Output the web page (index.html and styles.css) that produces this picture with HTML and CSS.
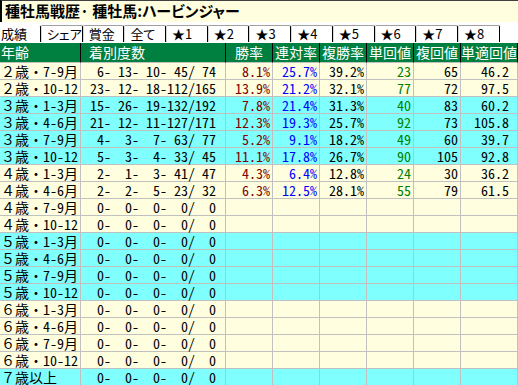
FILE: index.html
```html
<!DOCTYPE html>
<html lang="ja">
<head>
<meta charset="utf-8">
<title>種牡馬戦歴</title>
<link rel="stylesheet" href="styles.css">
</head>
<body>
<div class="title">種牡馬戦歴· 種牡馬:ハービンジャー</div>
<div class="tabs">
  <span class="tab active">成績</span>
  <span class="tab">シェア</span>
  <span class="tab">賞金</span>
  <span class="tab">全て</span>
  <span class="tab">★1</span>
  <span class="tab">★2</span>
  <span class="tab">★3</span>
  <span class="tab">★4</span>
  <span class="tab">★5</span>
  <span class="tab">★6</span>
  <span class="tab">★7</span>
  <span class="tab">★8</span>
</div>
<table class="grid">
  <colgroup>
    <col class="w-age"><col class="w-rec"><col class="w-n"><col class="w-n"><col class="w-n"><col class="w-n"><col class="w-n"><col class="w-last">
  </colgroup>
  <thead>
    <tr><th class="h-age">年齢</th><th class="h-rec">着別度数</th><th>勝率</th><th>連対率</th><th>複勝率</th><th>単回値</th><th>複回値</th><th>単適回値</th></tr>
  </thead>
  <tbody>
    <tr class="cream"><td class="age">２歳・<span class="hw">7-9</span>月</td><td class="rec"> 6- 13- 10- 45/ 74</td><td class="win">8.1%</td><td class="ren">25.7%</td><td>39.2%</td><td class="tan">23</td><td>65</td><td class="last">46.2</td></tr>
    <tr class="cream"><td class="age">２歳・<span class="hw">10-12</span></td><td class="rec">23- 12- 18-112/165</td><td class="win">13.9%</td><td class="ren">21.2%</td><td>32.1%</td><td class="tan">77</td><td>72</td><td class="last">97.5</td></tr>
    <tr class="cyan"><td class="age">３歳・<span class="hw">1-3</span>月</td><td class="rec">15- 26- 19-132/192</td><td class="win">7.8%</td><td class="ren">21.4%</td><td>31.3%</td><td class="tan">40</td><td>83</td><td class="last">60.2</td></tr>
    <tr class="cyan"><td class="age">３歳・<span class="hw">4-6</span>月</td><td class="rec">21- 12- 11-127/171</td><td class="win">12.3%</td><td class="ren">19.3%</td><td>25.7%</td><td class="tan">92</td><td>73</td><td class="last">105.8</td></tr>
    <tr class="cyan"><td class="age">３歳・<span class="hw">7-9</span>月</td><td class="rec"> 4-  3-  7- 63/ 77</td><td class="win">5.2%</td><td class="ren">9.1%</td><td>18.2%</td><td class="tan">49</td><td>60</td><td class="last">39.7</td></tr>
    <tr class="cyan"><td class="age">３歳・<span class="hw">10-12</span></td><td class="rec"> 5-  3-  4- 33/ 45</td><td class="win">11.1%</td><td class="ren">17.8%</td><td>26.7%</td><td class="tan">90</td><td>105</td><td class="last">92.8</td></tr>
    <tr class="cream"><td class="age">４歳・<span class="hw">1-3</span>月</td><td class="rec"> 2-  1-  3- 41/ 47</td><td class="win">4.3%</td><td class="ren">6.4%</td><td>12.8%</td><td class="tan">24</td><td>30</td><td class="last">36.2</td></tr>
    <tr class="cream"><td class="age">４歳・<span class="hw">4-6</span>月</td><td class="rec"> 2-  2-  5- 23/ 32</td><td class="win">6.3%</td><td class="ren">12.5%</td><td>28.1%</td><td class="tan">55</td><td>79</td><td class="last">61.5</td></tr>
    <tr class="cream"><td class="age">４歳・<span class="hw">7-9</span>月</td><td class="rec"> 0-  0-  0-  0/  0</td><td></td><td></td><td></td><td></td><td></td><td class="last"></td></tr>
    <tr class="cream"><td class="age">４歳・<span class="hw">10-12</span></td><td class="rec"> 0-  0-  0-  0/  0</td><td></td><td></td><td></td><td></td><td></td><td class="last"></td></tr>
    <tr class="cyan"><td class="age">５歳・<span class="hw">1-3</span>月</td><td class="rec"> 0-  0-  0-  0/  0</td><td></td><td></td><td></td><td></td><td></td><td class="last"></td></tr>
    <tr class="cyan"><td class="age">５歳・<span class="hw">4-6</span>月</td><td class="rec"> 0-  0-  0-  0/  0</td><td></td><td></td><td></td><td></td><td></td><td class="last"></td></tr>
    <tr class="cyan"><td class="age">５歳・<span class="hw">7-9</span>月</td><td class="rec"> 0-  0-  0-  0/  0</td><td></td><td></td><td></td><td></td><td></td><td class="last"></td></tr>
    <tr class="cyan"><td class="age">５歳・<span class="hw">10-12</span></td><td class="rec"> 0-  0-  0-  0/  0</td><td></td><td></td><td></td><td></td><td></td><td class="last"></td></tr>
    <tr class="cream"><td class="age">６歳・<span class="hw">1-3</span>月</td><td class="rec"> 0-  0-  0-  0/  0</td><td></td><td></td><td></td><td></td><td></td><td class="last"></td></tr>
    <tr class="cream"><td class="age">６歳・<span class="hw">4-6</span>月</td><td class="rec"> 0-  0-  0-  0/  0</td><td></td><td></td><td></td><td></td><td></td><td class="last"></td></tr>
    <tr class="cream"><td class="age">６歳・<span class="hw">7-9</span>月</td><td class="rec"> 0-  0-  0-  0/  0</td><td></td><td></td><td></td><td></td><td></td><td class="last"></td></tr>
    <tr class="cream"><td class="age">６歳・<span class="hw">10-12</span></td><td class="rec"> 0-  0-  0-  0/  0</td><td></td><td></td><td></td><td></td><td></td><td class="last"></td></tr>
    <tr class="cyan"><td class="age">７歳以上</td><td class="rec"> 0-  0-  0-  0/  0</td><td></td><td></td><td></td><td></td><td></td><td class="last"></td></tr>
  </tbody>
</table>
</body>
</html>
```

FILE: styles.css
```css
html, body {
  margin: 0;
  padding: 0;
  background: #ffffff;
}

body {
  font-family: "Noto Sans CJK JP", sans-serif;
  font-size: 14px;
  color: #000000;
  overflow: hidden;
}

.title {
  box-sizing: border-box;
  height: 22px;
  background: #ffffe0;
  border-left: 2px solid #000000;
  border-top: 1px solid #404040;
  padding-left: 3px;
  font-weight: bold;
  font-size: 15px;
  line-height: 20px;
  white-space: nowrap;
  font-feature-settings: "palt" 1;
}

.tabs {
  display: flex;
  margin-top: 3px;
  height: 17px;
  margin-bottom: 1px;
}

.tab {
  box-sizing: border-box;
  flex: 0 0 41.7px;
  height: 17px;
  border-top: 1px solid #a0a0a0;
  border-left: 1px solid #d8d8d8;
  border-right: 1px solid #000000;
  border-top-right-radius: 2px;
  padding-left: 5px;
  font-size: 13px;
  line-height: 16px;
  white-space: nowrap;
  overflow: hidden;
  font-feature-settings: "palt" 1;
}

.tab.active {
  flex-basis: 41px;
  border-top-color: transparent;
  border-left: none;
  padding-left: 1px;
}

.grid {
  border-collapse: separate;
  border-spacing: 0;
  table-layout: fixed;
  width: 518px;
}

.w-age { width: 81px; }
.w-rec { width: 145px; }
.w-n { width: 47px; }
.w-last { width: 57px; }

.grid th {
  background: #008040;
  color: #ffffff;
  font-weight: normal;
  border-right: 1px solid #000000;
  border-bottom: 1px solid #c0c0c0;
  padding: 0;
  line-height: 19px;
  text-align: center;
  white-space: nowrap;
}

.grid th.h-age {
  text-align: left;
  padding-left: 1px;
}

.grid th.h-rec {
  text-align: left;
  padding-left: 8px;
}

.grid td {
  border-right: 1px solid #c0c0c0;
  border-bottom: 1px solid #c0c0c0;
  padding: 0 2px 0 0;
  line-height: 16px;
  height: 16px;
  text-align: right;
  white-space: pre;
  font-feature-settings: "hwid" 1;
}

.grid td.age {
  text-align: left;
  padding-left: 1px;
  font-feature-settings: normal;
}

.grid td.age .hw {
  font-feature-settings: "hwid" 1;
}

.grid td.rec {
  text-align: center;
  padding: 0;
}

.grid td.last {
  padding-right: 8px;
}

.cream td { background: #ffffe0; }
.cyan td { background: #80ffff; }

.win { color: #800000; }
.ren { color: #0000ff; }
.tan { color: #008000; }
```
